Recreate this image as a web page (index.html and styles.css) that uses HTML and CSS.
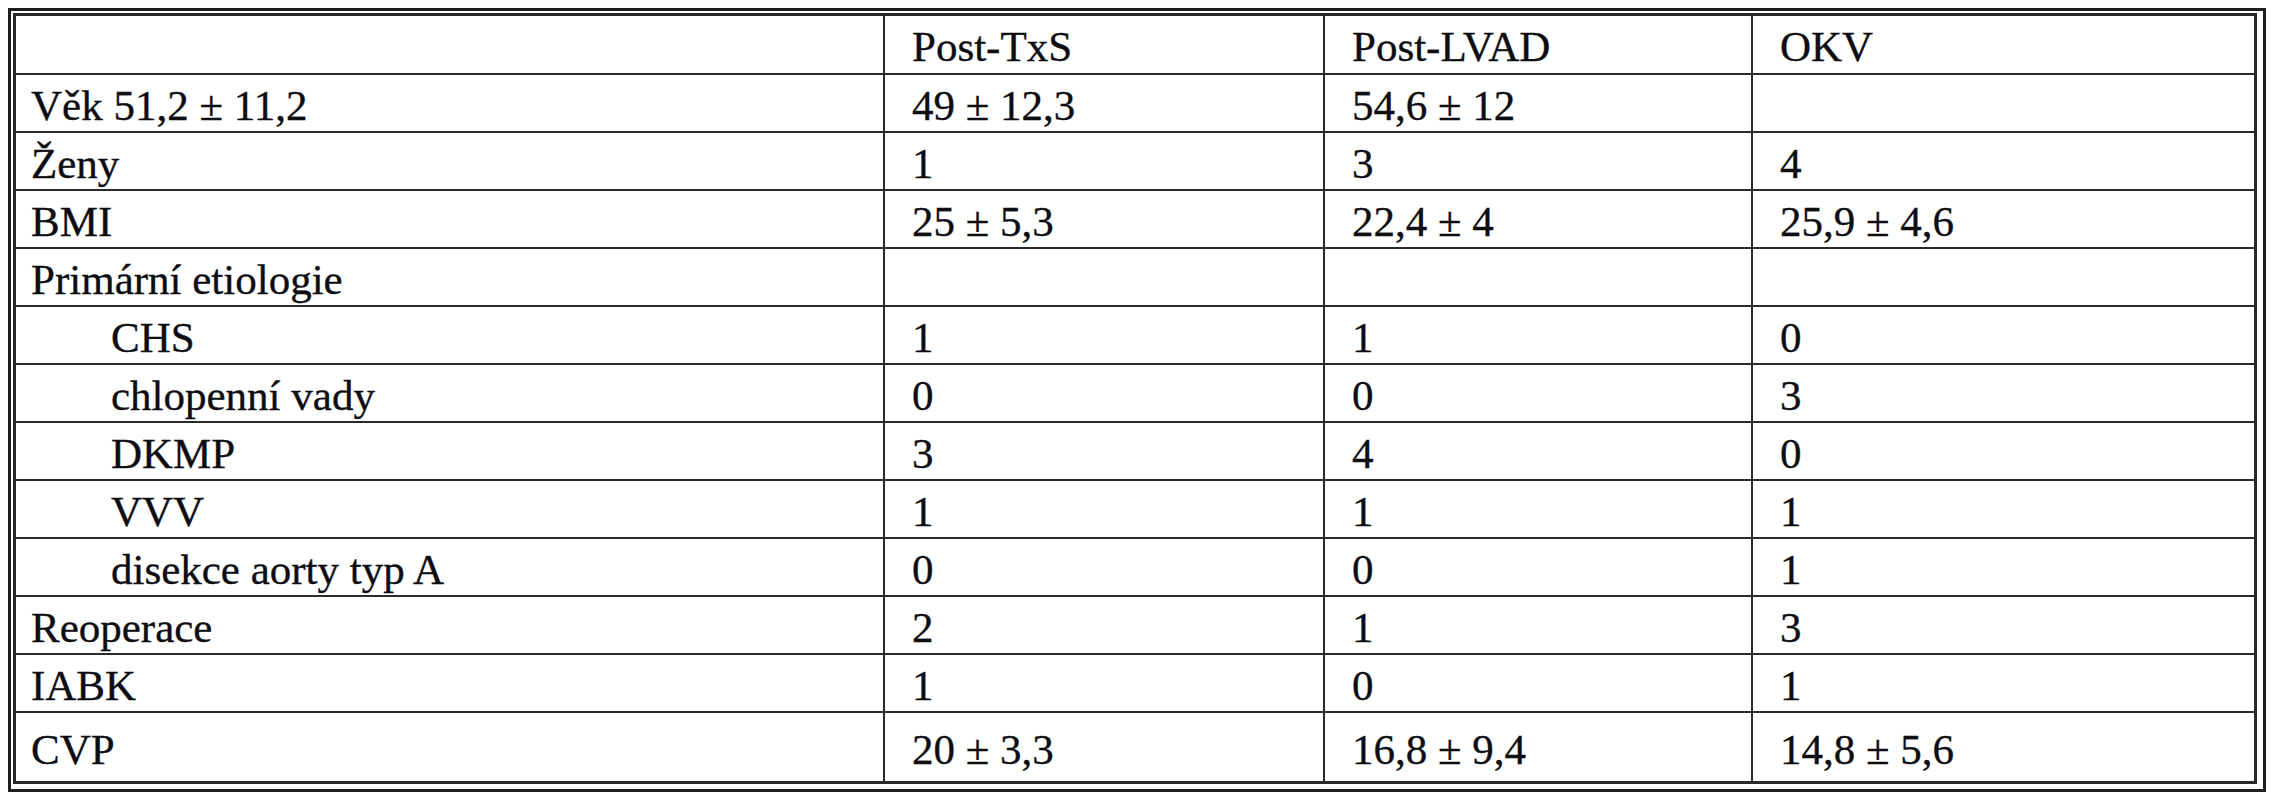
FILE: index.html
```html
<!DOCTYPE html>
<html lang="cs">
<head>
<meta charset="utf-8">
<title>Tabulka</title>
<link rel="stylesheet" href="styles.css">
</head>
<body>
<div class="frame">
  <table class="data">
    <colgroup>
      <col class="c0"><col class="c1"><col class="c2"><col class="c3">
    </colgroup>
    <tr class="head"><td></td><td>Post-TxS</td><td>Post-LVAD</td><td>OKV</td></tr>
    <tr><td>Věk 51,2 ± 11,2</td><td>49 ± 12,3</td><td>54,6 ± 12</td><td></td></tr>
    <tr><td>Ženy</td><td>1</td><td>3</td><td>4</td></tr>
    <tr><td>BMI</td><td>25 ± 5,3</td><td>22,4 ± 4</td><td>25,9 ± 4,6</td></tr>
    <tr><td>Primární etiologie</td><td></td><td></td><td></td></tr>
    <tr><td class="sub">CHS</td><td>1</td><td>1</td><td>0</td></tr>
    <tr><td class="sub">chlopenní vady</td><td>0</td><td>0</td><td>3</td></tr>
    <tr><td class="sub">DKMP</td><td>3</td><td>4</td><td>0</td></tr>
    <tr><td class="sub">VVV</td><td>1</td><td>1</td><td>1</td></tr>
    <tr><td class="sub">disekce aorty typ A</td><td>0</td><td>0</td><td>1</td></tr>
    <tr><td>Reoperace</td><td>2</td><td>1</td><td>3</td></tr>
    <tr><td>IABK</td><td>1</td><td>0</td><td>1</td></tr>
    <tr class="last"><td>CVP</td><td>20 ± 3,3</td><td>16,8 ± 9,4</td><td>14,8 ± 5,6</td></tr>
  </table>
</div>
</body>
</html>
```
FILE: styles.css
```css
html, body {
  background: #ffffff;
}
body {
  margin: 8px;
  font-family: "Liberation Serif", "Times New Roman", serif;
  color: #0d0d12;
}
.frame {
  border: 3px solid #1e1e1e;
  padding: 2px 6px 5px 2px;
  height: 771px;
}
.data {
  border: 3px solid #2a2a2a;
  border-collapse: separate;
  border-spacing: 0;
  width: 2244px;
  table-layout: fixed;
}
.c0 { width: 869px; }
.c1 { width: 440px; }
.c2 { width: 428px; }
.c3 { width: 501px; }
.data td {
  box-sizing: border-box;
  height: 58px;
  padding: 5px 0 0 27px;
  font-size: 43px;
  line-height: 48px;
  vertical-align: middle;
  white-space: nowrap;
  -webkit-text-stroke: 0.35px #0d0d12;
  border-right: 2px solid #2a2a2a;
  border-bottom: 2px solid #2a2a2a;
}
.data td:first-child {
  padding-left: 15px;
}
.data td.sub {
  padding-left: 95px;
}
.data td:last-child {
  border-right: none;
}
.data tr.head td {
  height: 59px;
}
.data tr.last td {
  height: 68px;
  border-bottom: none;
}
```
